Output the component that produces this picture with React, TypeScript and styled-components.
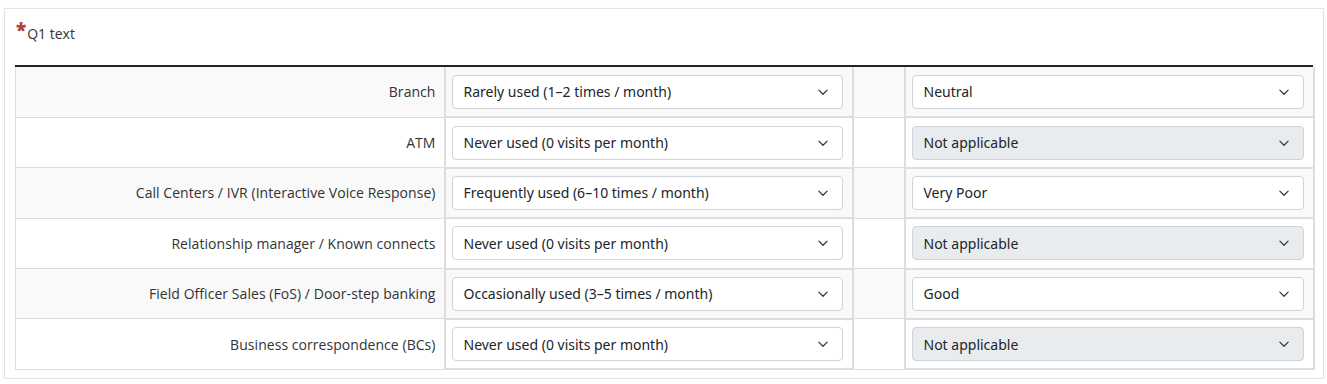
import React from "react";
import styled, { createGlobalStyle } from "styled-components";

const Global = createGlobalStyle`
  html, body { margin: 0; padding: 0; background: #fff; }
  body { font-family: "Open Sans", "Noto Sans", sans-serif; font-size: 14px; color: #333; }
  * { box-sizing: border-box; }
`;

const Page = styled.div`
  padding: 8px 3px 0 4px;
`;

const Card = styled.div`
  border: 1px solid #e3e3e3;
  box-shadow: 0 1px 2px rgba(0, 0, 0, 0.08);
  background: #fff;
  padding: 10px 10px 8px 10px;
`;

const Title = styled.div`
  display: flex;
  align-items: flex-start;
  padding: 5px 0 21px 1px;
  font-size: 14px;
  line-height: 20px;
  color: #333;
`;

const Star = styled.span`
  color: #b0413e;
  font-weight: 800;
  font-size: 19px;
  line-height: 14px;
  margin-top: -1px;
  margin-right: 1px;
`;

const TableFrame = styled.div`
  border-top: 2px solid #222;
`;

const Table = styled.table`
  width: 100%;
  border-collapse: collapse;
  table-layout: fixed;
`;

const Row = styled.tr<{ $striped: boolean }>`
  background: ${(p) => (p.$striped ? "#f9f9f9" : "#fff")};
  &:first-child td { border-top: none; }
`;

const LabelCell = styled.td`
  border: 1px solid #ddd;
  text-align: right;
  padding: 0 8px;
  height: 50.4px;
  color: #333;
  font-size: 14px;
  letter-spacing: 0.05px;
`;

const SelectCell = styled.td`
  border: 2px solid #ddd;
  padding: 7px 9px 7px 6px;
  vertical-align: middle;
`;

const GapCell = styled.td`
  border: 1px solid #ddd;
`;

const SelectBox = styled.div<{ $disabled: boolean }>`
  display: flex;
  align-items: center;
  justify-content: space-between;
  height: 34px;
  padding: 0 11px 0 11px;
  border: 1px solid #ced4da;
  border-radius: 4px;
  background: ${(p) => (p.$disabled ? "#e9ecef" : "#fff")};
  color: #212529;
  font-size: 14px;
  font-family: "Noto Sans", "Open Sans", sans-serif;
`;

const Chevron = () => (
  <svg width="16" height="12" viewBox="0 0 16 16" fill="none">
    <path d="m2.5 5.5 5.5 5.5 5.5-5.5" stroke="#343a40" strokeWidth="1.7" strokeLinecap="round" strokeLinejoin="round" />
  </svg>
);

const rows = [
  { label: "Branch", usage: "Rarely used (1–2 times / month)", rating: "Neutral", na: false },
  { label: "ATM", usage: "Never used (0 visits per month)", rating: "Not applicable", na: true },
  { label: "Call Centers / IVR (Interactive Voice Response)", usage: "Frequently used (6–10 times / month)", rating: "Very Poor", na: false },
  { label: "Relationship manager / Known connects", usage: "Never used (0 visits per month)", rating: "Not applicable", na: true },
  { label: "Field Officer Sales (FoS) / Door-step banking", usage: "Occasionally used (3–5 times / month)", rating: "Good", na: false },
  { label: "Business correspondence (BCs)", usage: "Never used (0 visits per month)", rating: "Not applicable", na: true },
];

export default function App() {
  return (
    <>
      <Global />
      <Page>
        <Card>
          <Title>
            <Star>*</Star>Q1 text
          </Title>
          <TableFrame>
            <Table>
              <colgroup>
                <col style={{ width: 429 }} />
                <col style={{ width: 408 }} />
                <col style={{ width: 52 }} />
                <col style={{ width: 409 }} />
              </colgroup>
              <tbody>
                {rows.map((r, i) => (
                  <Row key={r.label} $striped={i % 2 === 0}>
                    <LabelCell>{r.label}</LabelCell>
                    <SelectCell>
                      <SelectBox $disabled={false}>
                        <span>{r.usage}</span>
                        <Chevron />
                      </SelectBox>
                    </SelectCell>
                    <GapCell />
                    <SelectCell>
                      <SelectBox $disabled={r.na}>
                        <span>{r.rating}</span>
                        <Chevron />
                      </SelectBox>
                    </SelectCell>
                  </Row>
                ))}
              </tbody>
            </Table>
          </TableFrame>
        </Card>
      </Page>
    </>
  );
}
